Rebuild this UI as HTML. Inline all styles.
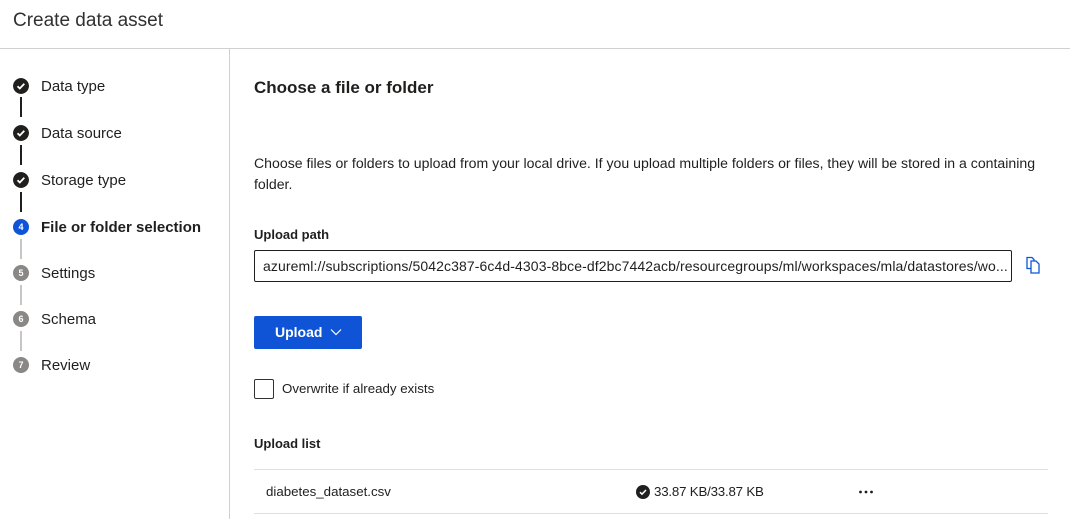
<!DOCTYPE html>
<html><head><meta charset="utf-8"><style>
*{margin:0;padding:0;box-sizing:border-box}
body{width:1070px;height:519px;overflow:hidden;background:#fff;font-family:"Liberation Sans",sans-serif;color:#201f1e;position:relative}
.a{position:absolute;white-space:nowrap}
.circ{position:absolute;left:13px;width:16px;height:16px;border-radius:50%;color:#fff;font-size:9px;font-weight:bold;text-align:center;line-height:16px}
.st{position:absolute;left:41px;font-size:15px;line-height:20px}
.ln{position:absolute;left:20px;width:2px;height:20px}
</style></head><body>
<div class="a" style="left:13px;top:10px;font-size:19px;color:#323130">Create data asset</div>
<div class="a" style="left:0;top:48px;width:1070px;height:1px;background:#d2d0ce"></div>
<div class="a" style="left:229px;top:49px;width:1px;height:470px;background:#d2d0ce"></div>

<svg class="circ" style="top:78px" viewBox="0 0 16 16"><circle cx="8" cy="8" r="8" fill="#201f1e"/><path d="M4.5 8.2l2.3 2.3 4.5-4.7" stroke="#fff" stroke-width="1.8" fill="none"/></svg>
<div class="st" style="top:77px">Data type</div>
<div class="ln" style="top:97px;background:#201f1e"></div>
<svg class="circ" style="top:125px" viewBox="0 0 16 16"><circle cx="8" cy="8" r="8" fill="#201f1e"/><path d="M4.5 8.2l2.3 2.3 4.5-4.7" stroke="#fff" stroke-width="1.8" fill="none"/></svg>
<div class="st" style="top:124px">Data source</div>
<div class="ln" style="top:145px;background:#201f1e"></div>
<svg class="circ" style="top:172px" viewBox="0 0 16 16"><circle cx="8" cy="8" r="8" fill="#201f1e"/><path d="M4.5 8.2l2.3 2.3 4.5-4.7" stroke="#fff" stroke-width="1.8" fill="none"/></svg>
<div class="st" style="top:171px">Storage type</div>
<div class="ln" style="top:192px;background:#201f1e"></div>
<div class="circ" style="top:219px;background:#0f54d6">4</div>
<div class="st" style="top:218px;font-weight:bold">File or folder selection</div>
<div class="ln" style="top:239px;background:#c8c6c4"></div>
<div class="circ" style="top:265px;background:#8a8886">5</div>
<div class="st" style="top:264px">Settings</div>
<div class="ln" style="top:285px;background:#c8c6c4"></div>
<div class="circ" style="top:311px;background:#8a8886">6</div>
<div class="st" style="top:310px">Schema</div>
<div class="ln" style="top:331px;background:#c8c6c4"></div>
<div class="circ" style="top:357px;background:#8a8886">7</div>
<div class="st" style="top:356px">Review</div>

<div class="a" style="left:254px;top:78px;font-size:17px;font-weight:bold;color:#201f1e">Choose a file or folder</div>
<div class="a" style="left:254px;top:153px;font-size:14.1px;line-height:21px;color:#201f1e">Choose files or folders to upload from your local drive. If you upload multiple folders or files, they will be stored in a containing<br>folder.</div>
<div class="a" style="left:254px;top:227px;font-size:13px;font-weight:bold">Upload path</div>
<div class="a" style="left:254px;top:250px;width:758px;height:32px;border:1px solid #201f1e;border-radius:2px;font-size:14px;line-height:30px;padding-left:8px;overflow:hidden;letter-spacing:0.1px">azureml://subscriptions/5042c387-6c4d-4303-8bce-df2bc7442acb/resourcegroups/ml/workspaces/mla/datastores/wo...</div>
<svg class="a" style="left:1025px;top:256px" width="16" height="18" viewBox="0 0 16 18"><path d="M2 1.5h5l2 2v9H2z" fill="#fff" stroke="#0f54d6" stroke-width="1.3"/><path d="M6 5h5l3 3v9H6z" fill="#fff" stroke="#0f54d6" stroke-width="1.3"/></svg>

<div class="a" style="left:254px;top:316px;width:108px;height:33px;background:#0f54d6;border-radius:2px;color:#fff;font-size:14px;font-weight:bold;line-height:33px;padding-left:21px">Upload <svg width="12" height="8" viewBox="0 0 12 8" style="margin-left:4px;vertical-align:1px"><path d="M1 1.5l5 5 5-5" stroke="#fff" stroke-width="1.2" fill="none"/></svg></div>

<div class="a" style="left:254px;top:379px;width:20px;height:20px;border:1px solid #323130;border-radius:2px"></div>
<div class="a" style="left:282px;top:381px;font-size:13.3px">Overwrite if already exists</div>

<div class="a" style="left:254px;top:436px;font-size:13px;font-weight:bold">Upload list</div>
<div class="a" style="left:254px;top:469px;width:794px;height:1px;background:#e1dfdd"></div>
<div class="a" style="left:266px;top:484px;font-size:13.3px">diabetes_dataset.csv</div>
<svg class="a" style="left:636px;top:485px" width="14" height="14" viewBox="0 0 14 14"><circle cx="7" cy="7" r="7" fill="#201f1e"/><path d="M4 7.2l2 2 4-4.2" stroke="#fff" stroke-width="1.5" fill="none"/></svg>
<div class="a" style="left:654px;top:484px;font-size:13.3px;letter-spacing:-0.2px">33.87 KB/33.87 KB</div>
<svg class="a" style="left:858px;top:490px" width="16" height="4" viewBox="0 0 16 4"><circle cx="2.5" cy="2" r="1.4" fill="#201f1e"/><circle cx="8" cy="2" r="1.4" fill="#201f1e"/><circle cx="13.5" cy="2" r="1.4" fill="#201f1e"/></svg>
<div class="a" style="left:254px;top:513px;width:794px;height:1px;background:#e1dfdd"></div>
</body></html>
